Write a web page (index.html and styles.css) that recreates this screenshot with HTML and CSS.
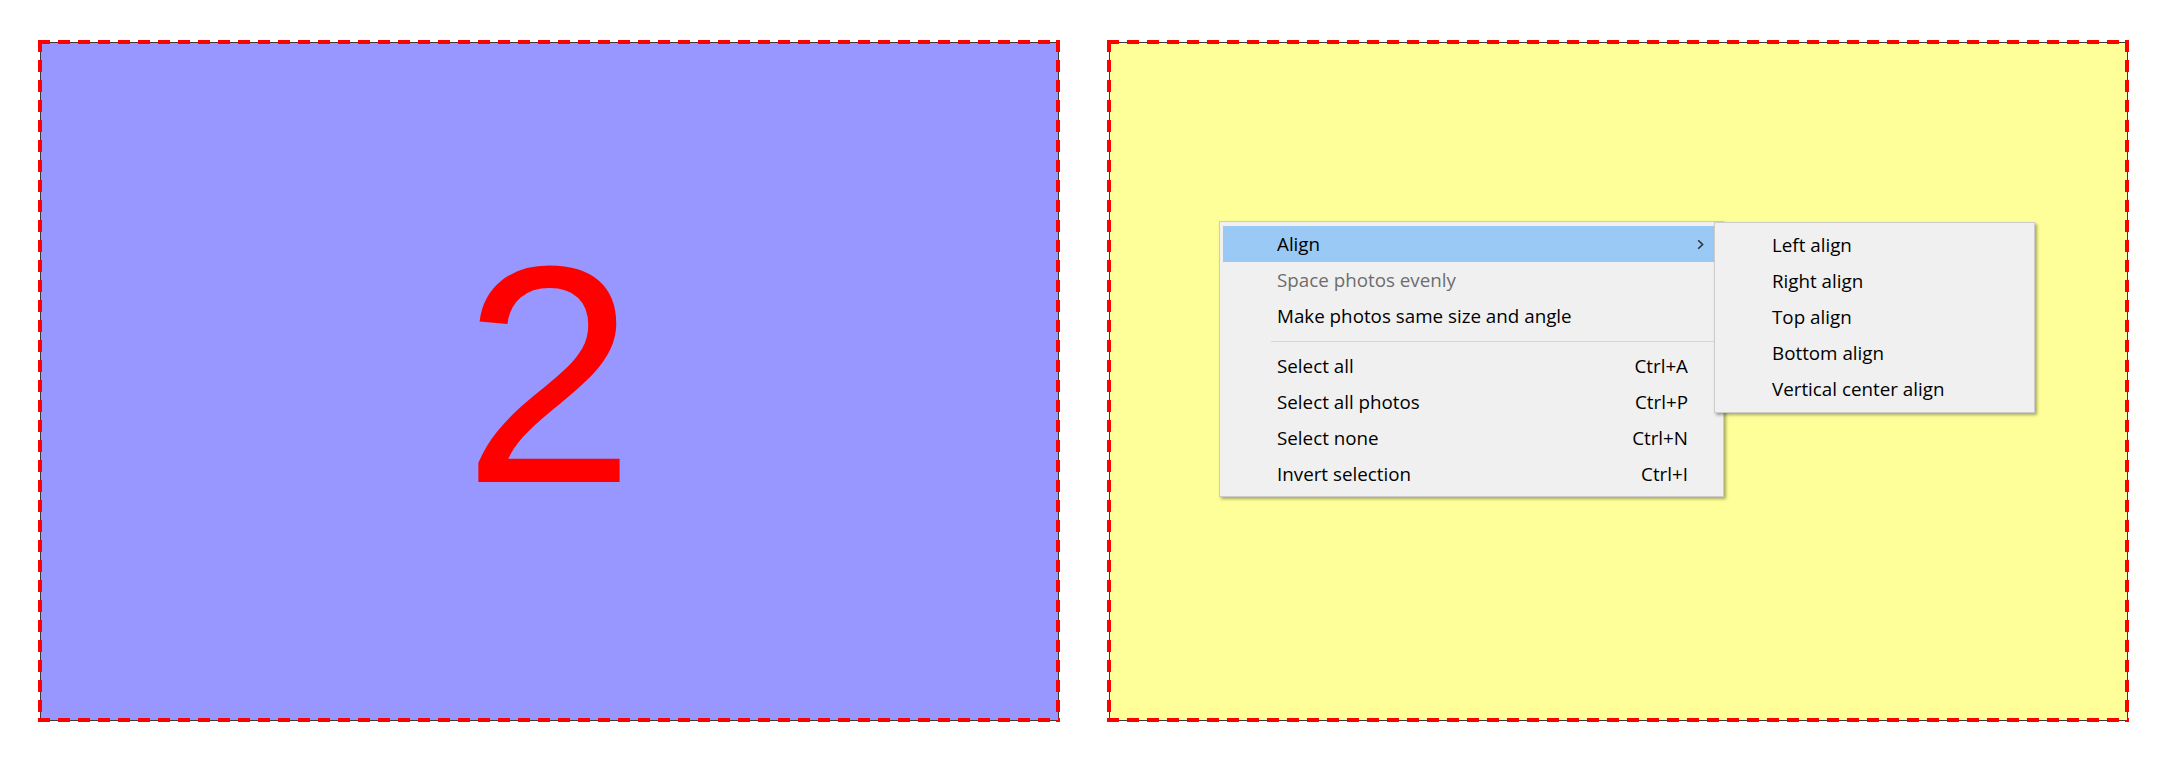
FILE: index.html
```html
<!DOCTYPE html>
<html lang="en">
<head>
  <meta charset="UTF-8">
  <title>Panels</title>
  <link rel="stylesheet" href="styles.css">
</head>
<body>
  <div class="stage">
    <!-- Painel da esquerda: só o número -->
    <div class="panel panel-blue">
      <span class="big-number">2</span>
    </div>

    <!-- Painel da direita com o menu de contexto aberto -->
    <div class="panel panel-yellow">
      <div class="menu">
        <div class="item active">
          <span class="label">Align</span>
          <span class="arrow">
            <svg width="7" height="11" viewBox="0 0 7 11"><path d="M1.2 1.2 L5.6 5.5 L1.2 9.8" fill="none" stroke="#333" stroke-width="1.6"/></svg>
          </span>
        </div>
        <div class="item disabled"><span class="label">Space photos evenly</span></div>
        <div class="item"><span class="label">Make photos same size and angle</span></div>
        <div class="sep"></div>
        <div class="item"><span class="label">Select all</span><span class="key">Ctrl+A</span></div>
        <div class="item"><span class="label">Select all photos</span><span class="key">Ctrl+P</span></div>
        <div class="item"><span class="label">Select none</span><span class="key">Ctrl+N</span></div>
        <div class="item"><span class="label">Invert selection</span><span class="key">Ctrl+I</span></div>

        <!-- Submenu do "Align" -->
        <div class="menu submenu">
          <div class="item"><span class="label">Left align</span></div>
          <div class="item"><span class="label">Right align</span></div>
          <div class="item"><span class="label">Top align</span></div>
          <div class="item"><span class="label">Bottom align</span></div>
          <div class="item"><span class="label">Vertical center align</span></div>
        </div>
      </div>
    </div>
  </div>
</body>
</html>
```

FILE: styles.css
```css
/* Reset básico */
* {
  box-sizing: border-box;
  margin: 0;
  padding: 0;
}

body {
  background: #ffffff;
  font-family: 'Open Sans', 'Noto Sans', sans-serif;
}

.stage {
  display: flex;
  gap: 47px;
  padding: 40px 0 0 38px;
}

/* Moldura tracejada vermelha com linha escura no meio */
.panel {
  --fill: #9999ff;
  position: relative;
  width: 1022px;
  height: 682px;
  background:
    repeating-linear-gradient(to right, #ff0000 0 12px, transparent 12px 20px) left top / 100% 4px no-repeat,
    repeating-linear-gradient(to right, #ff0000 0 12px, transparent 12px 20px) left bottom / 100% 4px no-repeat,
    repeating-linear-gradient(to bottom, #ff0000 0 12px, transparent 12px 20px) left top / 4px 100% no-repeat,
    repeating-linear-gradient(to bottom, #ff0000 0 12px, transparent 12px 20px) right top / 4px 100% no-repeat,
    linear-gradient(#3a3a3a, #3a3a3a) left 0 top 2px / 100% 1px no-repeat,
    linear-gradient(#3a3a3a, #3a3a3a) left 0 bottom 1px / 100% 1px no-repeat,
    linear-gradient(#3a3a3a, #3a3a3a) left 2px top 0 / 1px 100% no-repeat,
    linear-gradient(#3a3a3a, #3a3a3a) right 1px top 0 / 1px 100% no-repeat,
    linear-gradient(var(--fill), var(--fill)) center / calc(100% - 4px) calc(100% - 4px) no-repeat;
}

.panel-blue {
  --fill: #9797ff;
  display: flex;
  justify-content: center;
  align-items: center;
  padding-bottom: 12px;
}

.panel-yellow {
  --fill: #ffff99;
}

.big-number {
  font-family: 'Liberation Sans', Arial, sans-serif;
  font-size: 310px;
  line-height: 1;
  color: #ff0000;
}

/* Menu de contexto estilo Windows */
.menu {
  position: absolute;
  left: 112px;
  top: 181px;
  width: 505px;
  padding: 4px 3px;
  background: #f0f0f0;
  border: 1px solid #cccccc;
  box-shadow: 2px 2px 3px rgba(0, 0, 0, 0.35);
  font-size: 18.8px;
  color: #000;
}

.item {
  display: flex;
  align-items: center;
  height: 36px;
  padding: 0 32px 0 54px;
  white-space: nowrap;
}

.item.active {
  background: #99c9f4;
}

.item.disabled {
  color: #6d6d6d;
}

.key {
  margin-left: auto;
}

.arrow {
  margin-left: auto;
  margin-right: -16px;
  display: flex;
}

.sep {
  height: 1px;
  margin: 7px 0 6px 48px;
  background: #d7d7d7;
}

.submenu {
  left: 494px;
  top: 0;
  width: 321px;
  padding: 4px 3px 5px;
}
```
